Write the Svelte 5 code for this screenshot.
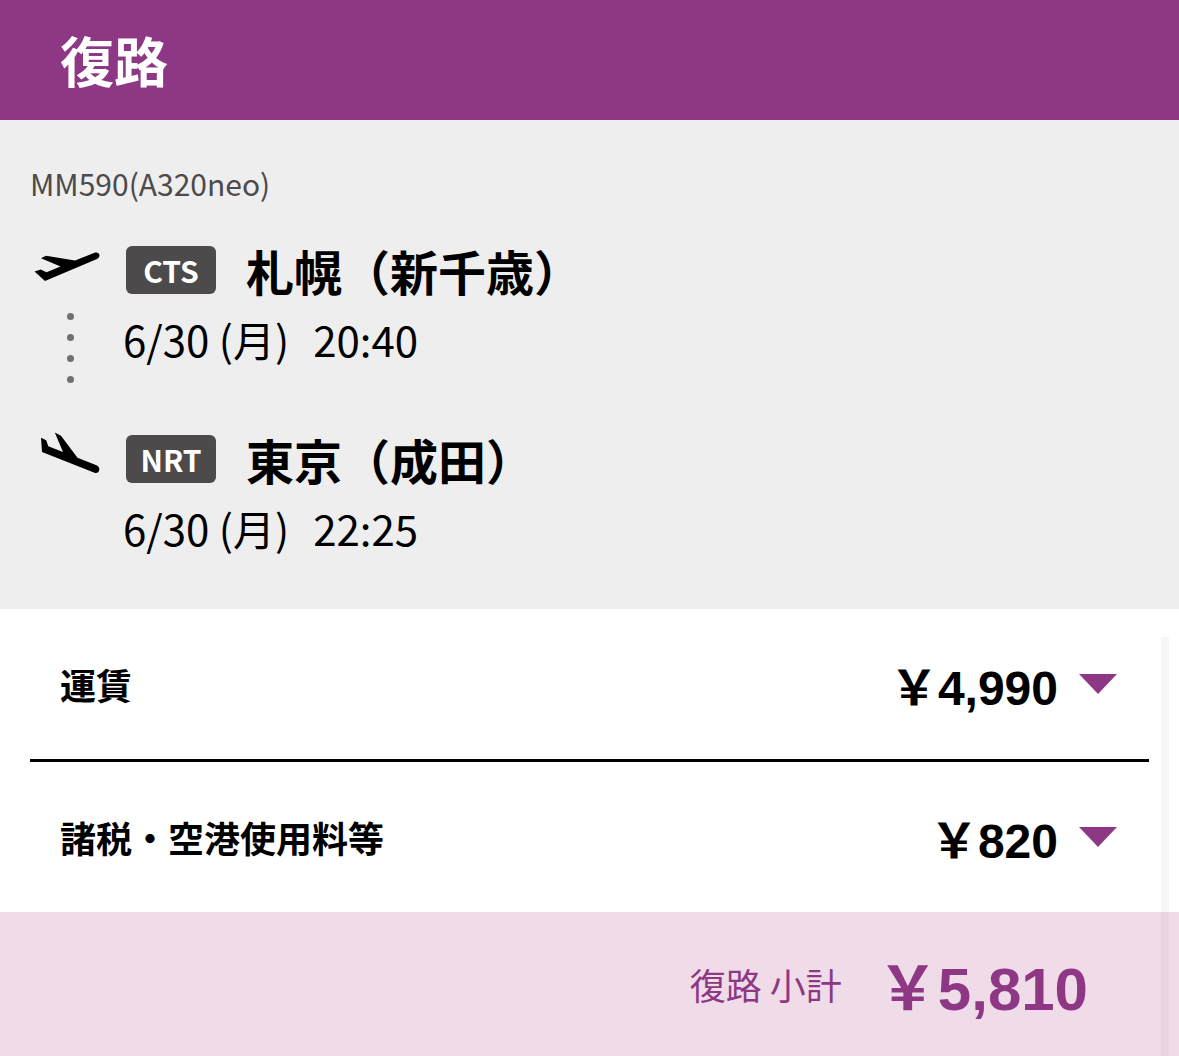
<script lang="ts">
	const legs = [
		{ type: 'departure', code: 'CTS', airport: '札幌（新千歳）', date: '6/30 (月)', time: '20:40' },
		{ type: 'arrival', code: 'NRT', airport: '東京（成田）', date: '6/30 (月)', time: '22:25' },
	];

	const charges = [
		{ label: '運賃', price: '￥4,990' },
		{ label: '諸税・空港使用料等', price: '￥820' },
	];

	let open = $state([false, false]);
</script>

<main class="trip">
	<header class="trip-header">
		<h1>復路</h1>
	</header>

	<section class="flight">
		<p class="flight-number">MM590(A320neo)</p>

		{#each legs as leg}
			<div class="leg">
				<div class="leg-track">
					{#if leg.type === 'departure'}
						<svg class="plane" viewBox="0 0 72 48" aria-hidden="true">
							<path d="M4.5 25.5L10.7 23.5L16.5 26.2L30.5 20.6L11 12.3L16 9.8L45 14.6L64.5 6.8C69.8 5.4 71.2 11 67 12.9L15 35Z" />
						</svg>
						<div class="dots">
							<i></i><i></i><i></i><i></i>
						</div>
					{:else}
						<svg class="plane" viewBox="0 0 72 48" aria-hidden="true">
							<path d="M11 2.8L16.2 5.2L18.3 11.3L33 17L24.8 -2.5L31 0.8L47.5 22.8L67 30.4C71.2 32.6 69.3 39.3 64.5 37.8L12 17Z" />
						</svg>
					{/if}
				</div>
				<div class="leg-body">
					<div class="place">
						<span class="code">{leg.code}</span>
						<h2>{leg.airport}</h2>
					</div>
					<p class="when">
						<span>{leg.date}</span>
						<time>{leg.time}</time>
					</p>
				</div>
			</div>
		{/each}
	</section>

	<section class="charges">
		{#each charges as charge, i}
			<button class="charge" type="button" aria-expanded={open[i]} onclick={() => (open[i] = !open[i])}>
				<span class="charge-label">{charge.label}</span>
				<span class="price">{charge.price}</span>
				<svg class="arrow" viewBox="0 0 38 20" aria-hidden="true">
					<path d="M0 0H38L19 20Z" />
				</svg>
			</button>
		{/each}
	</section>

	<footer class="subtotal">
		<span class="subtotal-label">復路 小計</span>
		<strong>￥5,810</strong>
	</footer>

	<div class="scroll-track"></div>
</main>

<style>
	:global(body) {
		margin: 0;
		background: #fff;
	}

	.trip {
		position: relative;
		font-family: 'Noto Sans CJK JP', sans-serif;
		color: #000;
	}

	h1, h2, p {
		margin: 0;
	}

	.trip-header {
		padding: 20px 60px;
		background: #8e3885;
		color: #fff;
	}

	h1 {
		font-size: 54px;
		line-height: 80px;
		font-weight: 700;
	}

	.flight {
		padding: 39px 30px 50px;
		background: #eee;
	}

	.flight-number {
		margin-bottom: 39px;
		font-size: 30px;
		line-height: 48px;
		color: #4c4a4b;
	}

	.leg {
		display: flex;
		gap: 21px;
	}

	.leg + .leg {
		margin-top: 52px;
	}

	.leg-track {
		flex: none;
		width: 72px;
	}

	.plane {
		display: block;
		width: 72px;
		height: 48px;
		overflow: visible;
	}

	.dots {
		display: flex;
		flex-direction: column;
		align-items: center;
		gap: 14px;
		margin-top: 19px;
		padding-left: 8px;
	}

	.dots i {
		width: 7px;
		height: 7px;
		border-radius: 50%;
		background: #707070;
	}

	.place {
		display: flex;
		align-items: center;
		gap: 30px;
		padding-left: 3px;
	}

	.code {
		width: 90px;
		border-radius: 6px;
		background: #4c4a4b;
		color: #fff;
		font-size: 30px;
		line-height: 48px;
		font-weight: 700;
		text-align: center;
	}

	h2 {
		font-size: 48px;
		line-height: 48px;
		font-weight: 700;
	}

	.when {
		display: flex;
		gap: 24px;
		margin-top: 14px;
		font-size: 42px;
		line-height: 62px;
	}

	.charges {
		padding: 0 30px;
	}

	.charge {
		display: flex;
		align-items: center;
		box-sizing: border-box;
		width: 100%;
		padding: 40px 32px 40px 30px;
		border: 0;
		background: none;
		color: inherit;
		font-family: inherit;
		font-weight: 700;
		text-align: left;
		cursor: pointer;
	}

	.charge + .charge {
		border-top: 3px solid #000;
	}

	.charge-label {
		flex: 1;
		font-size: 36px;
		line-height: 70px;
	}

	.price {
		padding-top: 10px;
		font-family: 'Liberation Sans', 'Noto Sans CJK JP', sans-serif;
		font-size: 48px;
		line-height: 60px;
	}

	.arrow {
		width: 38px;
		height: 20px;
		margin-left: 21px;
		fill: #8e3885;
	}

	.subtotal {
		display: flex;
		align-items: center;
		justify-content: flex-end;
		gap: 36px;
		padding: 32px 91px;
		background: #f0dce8;
		color: #8e3885;
	}

	.subtotal-label {
		font-size: 36px;
		line-height: 80px;
	}

	.subtotal strong {
		padding-top: 12px;
		font-family: 'Liberation Sans', 'Noto Sans CJK JP', sans-serif;
		font-size: 60px;
		line-height: 68px;
	}

	.scroll-track {
		position: absolute;
		top: 637px;
		right: 10px;
		bottom: 0;
		width: 8px;
		background: rgba(0, 0, 0, 0.03);
	}
</style>
